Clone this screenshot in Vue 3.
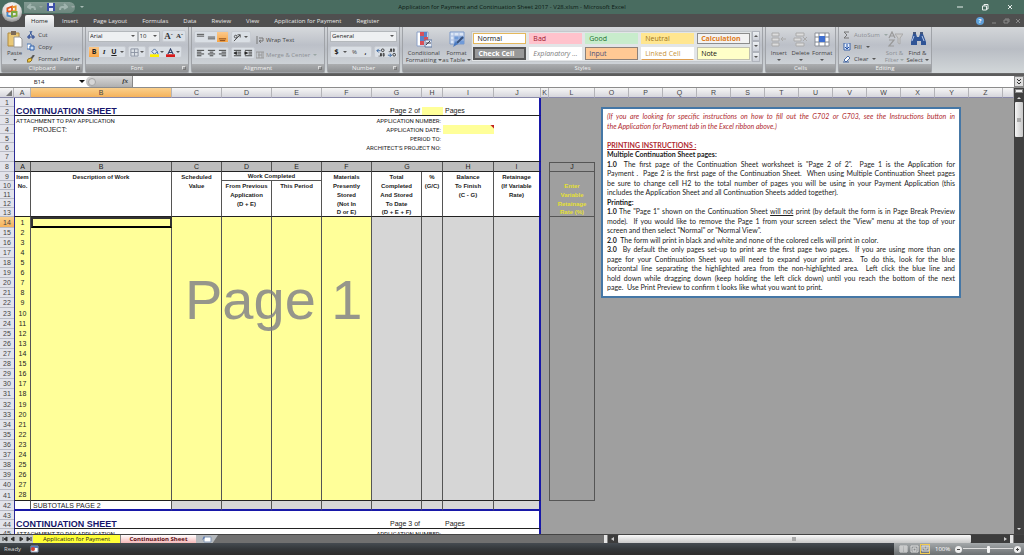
<script setup>
import { ref } from 'vue'

const tabs = ['Insert', 'Page Layout', 'Formulas', 'Data', 'Review', 'View', 'Application for Payment', 'Register']
const sheetCols = ['A', 'B', 'C', 'D', 'E', 'F', 'G', 'H', 'I', 'J', 'K', 'L']
const wideCols = ['O', 'P', 'Q', 'R', 'S', 'T', 'U', 'V', 'W', 'X', 'Y', 'Z']
const styles = ['Normal', 'Bad', 'Good', 'Neutral', 'Calculation', 'Check Cell', 'Explanatory ...', 'Input', 'Linked Cell', 'Note']
const zoomLevel = ref(50)

const c = (text = '', span = 1, cls = '') => ({ text, span, cls })

const pageRows = (first, page, fill) => [
  { n: first, cls: 'r9', cells: [c('', 10)] },
  {
    n: first + 1,
    cls: 'r9 rule',
    cells: [c('CONTINUATION SHEET', 5, 'title'), c(), c('Page ' + page + ' of', 1, 'right'), c('', 1, fill), c('Pages', 2)]
  },
  { n: first + 2, cls: 'r9', cells: [c('ATTACHMENT TO PAY APPLICATION', 5, 'small'), c('APPLICATION NUMBER:', 3, 'small right'), c('', 2)] }
]

const headLines = [
  ['Item', 'Description of Work', 'Scheduled', 'Work Completed', null, 'Materials', 'Total', '%', 'Balance', 'Retainage'],
  ['No.', '', 'Value', 'From Previous', 'This Period', 'Presently', 'Completed', '(G/C)', 'To Finish', '(If Variable'],
  ['', '', '', 'Application', '', 'Stored', 'And Stored', '', '(C - G)', 'Rate)'],
  ['', '', '', '(D + E)', '', '(Not In', 'To Date', '', '', ''],
  ['', '', '', '', '', 'D or E)', '(D + E + F)', '', '', '']
]
const retainage = ['', 'Enter', 'Variable', 'Retainage', 'Rate (%)']

const rows = [
  ...pageRows(1, 2, 'yellow'),
  {
    n: 4,
    cls: 'r9',
    cells: [c(), c('PROJECT:', 4), c('APPLICATION DATE:', 3, 'small right'), c('', 1, 'yellow note'), c()]
  },
  { n: 5, cls: 'r9', cells: [c('', 5), c('PERIOD TO:', 3, 'small right'), c('', 2)] },
  { n: 6, cls: 'r9', cells: [c('', 5), c("ARCHITECT'S PROJECT NO:", 3, 'small right'), c('', 2)] },
  { n: 7, cls: 'r10 rule', cells: [c('', 10)] },
  {
    n: 8,
    cls: 'r9 rule letters',
    cells: ['A', 'B', 'C', 'D', 'E', 'F'].map((t) => c(t, 1, 'line')).concat([c('G', 2, 'line'), c('H', 1, 'line'), c('I')]),
    side: 'J'
  },
  ...headLines.map((line, i) => ({
    n: 9 + i,
    cls: 'r9 heads' + (i === 4 ? ' rule' : ''),
    cells: line
      .map((t, k) => c(t, i === 0 && k === 3 ? 2 : 1, (k < 9 ? 'line' : '') + (i === 0 && k === 3 ? ' under' : '')))
      .filter((x) => x.text !== null),
    side: retainage[i]
  })),
  ...Array.from({ length: 28 }, (_, i) => ({
    n: 14 + i,
    cls: (i % 9 === 0 ? 'r11' : 'r10') + ' items' + (i === 27 ? ' rule' : ''),
    cells: Array.from({ length: 10 }, (_, k) =>
      c(k === 0 ? String(i + 1) : '', 1, (k < 6 ? 'yellow' : 'grey') + (k < 9 ? ' line' : '') + (i === 0 && k === 1 ? ' active' : ''))
    ),
    side: ''
  })),
  {
    n: 42,
    cls: 'r10 total',
    cells: [c('', 1, 'line'), c('SUBTOTALS PAGE 2', 1, 'line')].concat(
      Array.from({ length: 8 }, (_, k) => c('', 1, 'grey' + (k < 7 ? ' line' : '')))
    )
  },
  ...pageRows(43, 3, '')
]
</script>

<template>
  <div class="excel">
    <header class="titlebar">
      <button class="office" aria-label="Office menu">
        <svg viewBox="0 0 24 24">
          <defs>
            <radialGradient id="orb" cx=".5" cy=".3" r=".7">
              <stop offset="0" stop-color="#fff" /><stop offset=".6" stop-color="#dcdcdc" /><stop offset="1" stop-color="#8c8c8c" />
            </radialGradient>
          </defs>
          <circle cx="12" cy="12" r="11" fill="url(#orb)" />
          <g fill="none" stroke-width="2">
            <path d="M7 8l5-2v5l-5 1z" stroke="#e05a20" />
            <path d="M12 7l4-1v5h-4" stroke="#e8942c" />
            <path d="M7 12v4l5 1v-5" stroke="#4b8ac8" />
            <path d="M12 12h5v4l-5 1z" stroke="#7aa83c" />
          </g>
        </svg>
      </button>
      <div class="quick">
        <button aria-label="Undo"><svg viewBox="0 0 10 8"><path d="M2 4h4q2 0 2 3M4 1L1 4l3 2" /></svg></button>
        <i class="caret pale"></i>
        <button aria-label="Save">
          <svg viewBox="0 0 10 8"><path d="M1 0h8v8H1z" fill="#3b4fa8" stroke="none" /><path d="M3 0h4v3H3zM3 5h4v3H3z" fill="#e4e8f8" stroke="none" /></svg>
        </button>
        <button aria-label="Redo"><svg viewBox="0 0 10 8"><path d="M8 4H4Q2 4 2 7M6 1l3 3-3 2" /></svg></button>
        <i class="caret pale"></i>
      </div>
      <i class="caret more"></i>
      <h1>Application for Payment and Continuation Sheet 2017 - V28.xlsm - Microsoft Excel</h1>
      <div class="winbtns">
        <button aria-label="Minimize"><svg viewBox="0 0 8 8"><path d="M1 4h6" /></svg></button>
        <button aria-label="Restore"><svg viewBox="0 0 8 8"><path d="M1.500 3h4v4h-4zM3 3V1.500h4V6H6" /></svg></button>
        <button aria-label="Close"><svg viewBox="0 0 8 8"><path d="M2 2l4 4M6 2L2 6" /></svg></button>
      </div>
    </header>

    <nav class="tabs">
      <button class="tab on">Home</button>
      <button v-for="t in tabs" :key="t" class="tab">{{ t }}</button>
      <div class="winbtns doc">
        <button aria-label="Help" class="help">?</button>
        <button aria-label="Minimize workbook"><svg viewBox="0 0 8 8"><path d="M2 6h4" /></svg></button>
        <button aria-label="Restore workbook"><svg viewBox="0 0 8 8"><path d="M2 3h4v3H2zM3 2h4v3" /></svg></button>
        <button aria-label="Close workbook"><svg viewBox="0 0 8 8"><path d="M2 2l4 4M6 2L2 6" /></svg></button>
      </div>
    </nav>

    <section class="ribbon">
      <div class="group clip">
        <div class="body">
          <button class="big">
            <svg viewBox="0 0 16 17"><path d="M1 2h11v13H1z" fill="#e9c877" stroke="#b08a40" /><path d="M4 0h5v4H4z" fill="#7a6a58" /><path d="M7 6h6l2 2v8H7z" fill="#fff" stroke="#9a9a9a" /></svg>
            Paste<i class="caret"></i>
          </button>
          <div class="list">
            <button><svg viewBox="0 0 8 8"><path d="M5 0L2 5M3 0l2 5" stroke="#3a5a9c" /><path d="M1 5h2v2H1zM5 5h2v2H5z" fill="none" stroke="#1f3f8c" /></svg>Cut</button>
            <button><svg viewBox="0 0 8 8"><path d="M0 1h4v5H0z" fill="#fff" stroke="#4a78b8" /><path d="M3 3h4v4H3z" fill="#c8dcf4" stroke="#2f5fa8" /></svg>Copy</button>
            <button><svg viewBox="0 0 8 8"><path d="M7 0L4 4" stroke="#555" stroke-width="2" /><path d="M0 7l1-3 3-1 1 2-2 2z" fill="#f0c840" stroke="#907020" /></svg>Format Painter</button>
          </div>
        </div>
        <footer>Clipboard<i class="launch"></i></footer>
      </div>

      <div class="group font">
        <div class="body stack">
          <div class="line1">
            <span class="pick face"><select aria-label="Font"><option>Arial</option></select></span>
            <span class="pick size"><select aria-label="Font size"><option>10</option></select></span>
            <span class="set gapl"><button class="ga">A<sup>ˆ</sup></button><button class="ga less">A<sup>ˇ</sup></button></span>
          </div>
          <div class="line1">
            <span class="set">
              <button class="b on">B</button><button class="i">I</button><button class="u">U</button><i class="caret"></i>
            </span>
            <span class="set">
              <button aria-label="Borders"><svg viewBox="0 0 10 10"><path d="M1 1h8v8H1zM5 1v8M1 5h8" fill="none" stroke="#8a92a0" /></svg></button><i class="caret"></i>
            </span>
            <span class="set">
              <button aria-label="Fill color"><svg viewBox="0 0 10 10"><path d="M2 4l3-3 3 3-3 3z" fill="#dfe8f4" stroke="#44618c" /><path d="M8 4l1 3" stroke="#2f6fc0" /><path d="M0 7h10v3H0z" fill="#fff000" /></svg></button><i class="caret"></i>
              <button aria-label="Font color"><svg viewBox="0 0 10 10"><path d="M2 7l3-6 3 6M3 5h4" fill="none" stroke="#2f3f66" stroke-width="1.200" /><path d="M0 7h10v3H0z" fill="#d81818" /></svg></button><i class="caret"></i>
            </span>
          </div>
        </div>
        <footer>Font<i class="launch"></i></footer>
      </div>

      <div class="group align">
        <div class="body">
          <div class="stack">
            <div class="line1">
              <span class="set">
                <button aria-label="Top align"><svg viewBox="0 0 10 10"><path d="M1 1.500h8M1 3.500h8" stroke="#444" /></svg></button>
                <button aria-label="Middle align"><svg viewBox="0 0 10 10"><path d="M1 4.500h8M1 6.500h8" stroke="#444" /></svg></button>
                <button aria-label="Bottom align" class="on"><svg viewBox="0 0 10 10"><path d="M1 6.500h8M2 8.500h6" stroke="#7a3c10" /></svg></button>
              </span>
              <span class="set"><button aria-label="Orientation"><svg viewBox="0 0 10 10"><path d="M1 9l7-7M5 2h3v3" fill="none" stroke="#444" /><circle cx="3" cy="4" r="1.500" fill="none" stroke="#444" /></svg></button><i class="caret"></i></span>
            </div>
            <div class="line1">
              <span class="set">
                <button aria-label="Align left"><svg viewBox="0 0 10 10"><path d="M1 1.500h8M1 3.500h5M1 5.500h8M1 7.500h5" stroke="#333" /></svg></button>
                <button aria-label="Center"><svg viewBox="0 0 10 10"><path d="M1 1.500h8M3 3.500h4M1 5.500h8M3 7.500h4" stroke="#333" /></svg></button>
                <button aria-label="Align right"><svg viewBox="0 0 10 10"><path d="M1 1.500h8M4 3.500h5M1 5.500h8M4 7.500h5" stroke="#333" /></svg></button>
              </span>
              <span class="set">
                <button aria-label="Decrease indent"><svg viewBox="0 0 10 10"><path d="M1 1.500h8M5 3.500h4M5 5.500h4M1 7.500h8M4 3v3L1 4.500z" stroke="#333" /></svg></button>
                <button aria-label="Increase indent"><svg viewBox="0 0 10 10"><path d="M1 1.500h8M5 3.500h4M5 5.500h4M1 7.500h8M1 3v3l3-1.500z" stroke="#333" /></svg></button>
              </span>
            </div>
          </div>
          <div class="list wide">
            <button><svg viewBox="0 0 8 8"><path d="M1 0v8M3 2h4v3H3M5 4L3 5l2 2" fill="none" stroke="#777" /></svg>Wrap Text</button>
            <button class="dim"><svg viewBox="0 0 8 8"><path d="M0 1h8v6H0zM2 4h4M3 1v6M6 1v6" fill="none" stroke="#999" /></svg>Merge &amp; Center<i class="caret pale"></i></button>
          </div>
        </div>
        <footer>Alignment<i class="launch"></i></footer>
      </div>

      <div class="group number">
        <div class="body stack">
          <div class="line1"><span class="pick general"><select aria-label="Number format"><option>General</option></select></span></div>
          <div class="line1">
            <span class="set"><button class="b">$</button><i class="caret"></i><button>%</button><button class="b">,</button></span>
            <span class="set">
              <button aria-label="Increase decimal"><svg viewBox="0 0 10 10"><path d="M1 3h4M3 1L1 3l2 2" fill="none" stroke="#2f5f9c" /><circle cx="7.500" cy="2.500" r="1.500" fill="none" stroke="#333" /><path d="M3 9h1M5 6h1v3H5zM8 6h1v3H8z" fill="none" stroke="#333" /></svg></button>
              <button aria-label="Decrease decimal"><svg viewBox="0 0 10 10"><path d="M1 8h4M3 6l2 2-2 2" fill="none" stroke="#2f5f9c" /><circle cx="8" cy="7.500" r="1.500" fill="none" stroke="#333" /><path d="M2 4h1M4 1h1v3H4zM7 1h1v3H7z" fill="none" stroke="#333" /></svg></button>
            </span>
          </div>
        </div>
        <footer>Number<i class="launch"></i></footer>
      </div>

      <div class="group styles">
        <div class="body">
          <button class="big cond">
            <svg viewBox="0 0 16 17"><path d="M1 1h11v14H1z" fill="#fff" stroke="#8aa0c8" /><path d="M4 1h4v4H4zM8 6h4v4H8zM4 10h4v4H4z" fill="#d8505a" /><path d="M4 5h4v5H4zM8 1h3v5H8z" fill="#5b82c8" /><path d="M9 9h7v7H9z" fill="#e8eef8" stroke="#6078a0" /><path d="M10 14l4-4M10 12h5" stroke="#445" /></svg>
            <span>Conditional<br />Formatting <i class="caret inl"></i></span>
          </button>
          <button class="big fmt">
            <svg viewBox="0 0 16 17"><path d="M1 1h14v12H1z" fill="#dbe6f6" stroke="#7a98c8" /><path d="M5 5h10v8H5z" fill="#6f9ad8" /><path d="M1 5h14M1 9h14M5 1v12M10 1v12" stroke="#a8bce0" /><path d="M14 6l-6 6" stroke="#38527c" stroke-width="2" /><path d="M4 16l2-5 3 2z" fill="#4878c0" /></svg>
            <span>Format<br />as Table <i class="caret inl"></i></span>
          </button>
          <div class="gallery">
            <button v-for="(s, i) in styles" :key="s" :class="'st s' + i">{{ s }}</button>
          </div>
          <div class="gscroll">
            <button aria-label="Scroll styles up"><i class="caret up"></i></button>
            <button aria-label="Scroll styles down"><i class="caret"></i></button>
            <button aria-label="More styles"><i class="caret"></i></button>
          </div>
        </div>
        <footer>Styles</footer>
      </div>

      <div class="group cells">
        <div class="body">
          <button class="big">
            <svg viewBox="0 0 16 17"><path d="M1 2h7v3H1zM1 7h7v3H1zM1 12h7v3H1z" fill="#ddd" stroke="#aaa" /><path d="M15 8h-5M12 6l-2 2 2 2" fill="none" stroke="#aaa" /></svg>
            Insert<i class="caret"></i>
          </button>
          <button class="big">
            <svg viewBox="0 0 16 17"><path d="M3 2h8v3H3zM1 7h7v3H1zM3 12h8v3H3z" fill="#ddd" stroke="#aaa" /><path d="M10 6l4 4M14 6l-4 4" fill="none" stroke="#aaa" /></svg>
            Delete<i class="caret"></i>
          </button>
          <button class="big">
            <svg viewBox="0 0 16 17"><path d="M1 2h14v13H1z" fill="#fff" stroke="#8c9098" /><path d="M5 2v13M11 2v13M1 6h14M1 11h14" stroke="#7c8490" /><path d="M5 5h6v6H5z" fill="#3f6fd0" /></svg>
            Format<i class="caret"></i>
          </button>
        </div>
        <footer>Cells</footer>
      </div>

      <div class="group editing">
        <div class="body">
          <div class="list">
            <button class="dim"><svg viewBox="0 0 8 8"><path d="M6 1H1l3 3-3 3h5" fill="none" stroke="#777" /></svg>AutoSum<i class="caret pale"></i></button>
            <button><svg viewBox="0 0 8 8"><path d="M1 0h6v7H1z" fill="#e8f0fc" stroke="#3a62a8" /><path d="M4 1v4M2 4l2 2 2-2" fill="none" stroke="#1f4fa8" /></svg>Fill<i class="caret"></i></button>
            <button><svg viewBox="0 0 8 8"><path d="M1 5l4-4 2 2-4 4z" fill="#fff" stroke="#4a6ca8" /><path d="M0 7h6" stroke="#3f62a0" /></svg>Clear<i class="caret"></i></button>
          </div>
          <button class="big dim">
            <svg viewBox="0 0 16 17"><path d="M2 7l3-6 3 6M3 5h4M2 9h5l-5 6h5" fill="none" stroke="#999" stroke-width="1.200" /><path d="M8 3h8l-3 4v6l-2-1V7z" fill="#ccc" stroke="#aaa" /></svg>
            <span>Sort &amp;<br />Filter <i class="caret inl pale"></i></span>
          </button>
          <button class="big">
            <svg viewBox="0 0 16 17"><path d="M3 3h3l1 3h2l1-3h3l3 8v3h-5v-4H7v4H1v-3z" fill="#2f5496" /><path d="M4 5l-2 5M12 5l2 5" stroke="#b4c8ec" /><path d="M3 1h3v2H3zM10 1h3v2h-3z" fill="#44577c" /></svg>
            <span>Find &amp;<br />Select <i class="caret inl"></i></span>
          </button>
        </div>
        <footer>Editing</footer>
      </div>
    </section>

    <div class="fbar">
      <input class="name" aria-label="Name box" value="B14" />
      <button class="drop" aria-label="Name list"><i class="caret dark"></i></button>
      <div class="fx"><i class="knob"></i><button aria-label="Insert function">fx</button></div>
      <input class="formula" aria-label="Formula" />
      <button class="expand" aria-label="Expand formula bar"><svg viewBox="0 0 6 8"><path d="M1 1l2 2 2-2M1 4l2 2 2-2" /></svg></button>
    </div>

    <main class="work">
      <div class="sheet">
        <table>
          <colgroup>
            <col class="c14" /><col class="c17" /><col class="c141" />
            <col v-for="k in 5" :key="k" class="c50" />
            <col class="c21" /><col class="c51" /><col class="c47" /><col class="c8" /><col class="c46" />
            <col v-for="k in wideCols" :key="k" class="c34" />
            <col />
          </colgroup>
          <thead>
            <tr>
              <th class="corner" aria-label="Select all"><i></i></th>
              <th v-for="k in sheetCols" :key="k" :class="{ sel: k === 'B' }">{{ k }}</th>
              <th v-for="k in wideCols" :key="k">{{ k }}</th>
              <th></th>
            </tr>
          </thead>
          <tbody>
            <tr v-for="r in rows" :key="r.n" :class="r.cls">
              <th :class="{ sel: r.n === 14 }">{{ r.n }}</th>
              <td v-for="(d, i) in r.cells" :key="i" :colspan="d.span" class="s" :class="d.cls">{{ d.text }}</td>
              <td></td>
              <td :class="{ side: r.side !== undefined }">{{ r.side }}</td>
              <td colspan="13"></td>
            </tr>
          </tbody>
        </table>
        <div class="watermark">Page 1</div>
        <article class="help-box">
          <p class="red full">(If you are looking for specific instructions on how to fill out the G702 or G703, see the Instructions button in</p>
          <p class="red">the Application for Payment tab in the Excel ribbon above.)</p>
          <p>&nbsp;</p>
          <p class="head"><u>PRINTING INSTRUCTIONS :</u></p>
          <p><b>Multiple Continuation Sheet pages:</b></p>
          <p class="full"><b>1.0</b>&nbsp; The first page of the Continuation Sheet worksheet is "Page 2 of 2".&nbsp; Page 1 is the Application for</p>
          <p class="full">Payment .&nbsp; Page 2 is the first page of the Continuation Sheet.&nbsp; When using Multiple Continuation Sheet pages</p>
          <p class="full">be sure to change cell H2 to the total number of pages you will be using in your Payment Application (this</p>
          <p>includes the Application Sheet and all Continuation Sheets added together).</p>
          <p><b>Printing:</b></p>
          <p class="full"><b>1.0</b> The "Page 1" shown on the Continuation Sheet <u>will not</u> print (by default the form is in Page Break Preview</p>
          <p class="full">mode).&nbsp; If you would like to remove the Page 1 from your screen select the "View" menu at the top of your</p>
          <p>screen and then select "Normal" or "Normal View".</p>
          <p><b>2.0</b>&nbsp; The form will print in black and white and none of the colored cells will print in color.</p>
          <p class="full"><b>3.0</b>&nbsp; By default the only pages set-up to print are the first page two pages.&nbsp; If you are using more than one</p>
          <p class="full">page for your Continuation Sheet you will need to expand your print area.&nbsp; To do this, look for the blue</p>
          <p class="full">horizontal line separating the highlighted area from the non-highlighted area.&nbsp; Left click the blue line and</p>
          <p class="full">hold down while dragging down (keep holding the left click down) until you reach the bottom of the next</p>
          <p>page.&nbsp; Use Print Preview to confirm t looks like what you want to print.</p>
        </article>
      </div>
      <div class="vscroll">
        <i class="split"></i>
        <button aria-label="Scroll up"><i class="caret up white"></i></button>
        <div class="thumb"><i></i></div>
        <div class="track"></div>
        <button aria-label="Scroll down"><i class="caret white"></i></button>
      </div>
    </main>

    <div class="bottom">
      <div class="navs">
        <button aria-label="First sheet"><svg viewBox="0 0 6 6"><path d="M1 1v4M5 1v4L2 3z" /></svg></button>
        <button aria-label="Previous sheet"><svg viewBox="0 0 6 6"><path d="M4 1v4L1 3z" /></svg></button>
        <button aria-label="Next sheet"><svg viewBox="0 0 6 6"><path d="M2 1v4l3-2z" /></svg></button>
        <button aria-label="Last sheet"><svg viewBox="0 0 6 6"><path d="M5 1v4M1 1v4l3-2z" /></svg></button>
      </div>
      <button class="stab app">Application for Payment</button>
      <button class="stab cur">Continuation Sheet</button>
      <button class="newtab" aria-label="Insert worksheet"><svg viewBox="0 0 22 9"><path d="M0 0h22l-6 9H0z" fill="#b4b8bc" /><path d="M8 2h7v5H8z" fill="#fff" stroke="#8296b4" /><path d="M6 5l2-4 1 2z" fill="#5a7ab0" /></svg></button>
      <div class="fillbar"></div>
      <div class="hscroll">
        <i class="split"></i>
        <button aria-label="Scroll left"><svg viewBox="0 0 6 6"><path d="M4 1v4L1 3z" /></svg></button>
        <div class="thumb"><i></i></div>
        <div class="track"></div>
        <button aria-label="Scroll right"><svg viewBox="0 0 6 6"><path d="M2 1v4l3-2z" /></svg></button>
        <i class="split"></i>
      </div>
    </div>

    <footer class="status">
      <span>Ready</span>
      <button class="macro" aria-label="Record macro"><svg viewBox="0 0 9 8"><path d="M1 1h7v6H1z" fill="#fff" stroke="#8c9cb8" /><path d="M1 1h7v2H1z" fill="#5a7cb8" /><circle cx="3" cy="4" r="2" fill="#d04030" /></svg></button>
      <div class="zoom">
        <button aria-label="Normal view"><svg viewBox="0 0 9 8"><path d="M1 1h7v6H1zM1 3h7M1 5h7M3 1v6M6 1v6" /></svg></button>
        <button aria-label="Page layout view"><svg viewBox="0 0 9 8"><path d="M1 1h7v6H1zM3 3h3v3H3z" /></svg></button>
        <button aria-label="Page break preview" class="on"><svg viewBox="0 0 9 8"><path d="M1 1h7v5H1zM3 1v3h3V1" /></svg></button>
        <span>100%</span>
        <button class="round" aria-label="Zoom out"><svg viewBox="0 0 7 7"><circle cx="3.500" cy="3.500" r="3.500" fill="#eee" stroke="none" /><path d="M2 3.500h3" stroke="#444" /></svg></button>
        <input v-model="zoomLevel" type="range" aria-label="Zoom" />
        <button class="round" aria-label="Zoom in"><svg viewBox="0 0 7 7"><circle cx="3.500" cy="3.500" r="3.500" fill="#eee" stroke="none" /><path d="M2 3.500h3M3.500 2v3" stroke="#444" /></svg></button>
      </div>
    </footer>
  </div>
</template>

<style>
body { margin: 0; background: #9f9f9f; }
</style>

<style scoped>
.excel { display: flex; flex-direction: column; height: 100vh; overflow: hidden; font: 6px/8px "Open Sans", "Noto Sans", sans-serif; color: #333; }
.excel * { box-sizing: border-box; }
button, input, select { font: inherit; color: inherit; margin: 0; padding: 0; border: 0; background: none; min-width: 0; outline: 0; }
button { display: inline-flex; align-items: center; justify-content: center; white-space: nowrap; }
svg { display: block; flex: none; }
.caret { display: inline-block; flex: none; width: 0; height: 0; border: 2px solid transparent; border-top-color: #555; border-bottom: 0; }
.caret.pale { border-top-color: #9aa6a4; }
.caret.white { border-top-color: #ddd; }
.caret.dark { border-width: 3px 3px 0; border-top-color: #111; }
.caret.up { transform: rotate(180deg); }
.caret.inl { vertical-align: middle; }

/* title bar */
.titlebar { position: relative; z-index: 3; display: flex; align-items: center; flex: none; height: 14px; background: #496c60; }
.office { position: absolute; left: 0; top: 0; width: 23px; height: 24px; }
.office svg { width: 22px; height: 22px; }
.quick { display: flex; align-items: center; gap: 3px; width: 51px; height: 11px; margin-left: 24px; padding-left: 3px; border-radius: 0 6px 6px 0; background: linear-gradient(#829a92, #6c877e); }
.quick svg { width: 10px; height: 8px; fill: none; stroke: #a0b4ae; stroke-width: 2; }
.more { margin-left: 5px; border-top-color: #a8bab4; }
.titlebar h1 { position: absolute; left: 0; right: 0; margin: 0; text-align: center; pointer-events: none; font: 6px/10px "Open Sans", sans-serif; color: #0c1a14; }
.winbtns { display: flex; align-items: center; gap: 17px; margin-left: auto; padding-right: 10px; }
.winbtns svg { width: 8px; height: 8px; fill: none; stroke: #e8eeec; }
.winbtns.doc { gap: 4px; padding-right: 2px; }
.winbtns.doc svg { stroke: #8a8a8a; }
.help { width: 8px; height: 8px; border-radius: 4px; background: #5f9fd8; color: #fff; font-weight: 700; margin-right: 2px; }

/* tab strip */
.tabs { display: flex; align-items: flex-end; gap: 1px; flex: none; height: 13px; padding-left: 25px; background: #4f4f4f; color: #e8e8e8; }
.tab { height: 12px; padding: 0 7px; }
.tab.on { padding: 0 6px; background: linear-gradient(#fafafa, #d6d9dc); border-radius: 2px 2px 0 0; color: #222; }
.doc { align-self: center; }

/* ribbon */
.ribbon { display: flex; gap: 2px; flex: none; height: 49px; padding: 0 1px 2px; background: linear-gradient(#d3d6d9, #b9bdc4 45%, #d2d7d9 94%, #5c5c5c 95%); color: #444; }
.group { display: flex; flex-direction: column; flex: none; height: 46px; border: 1px solid #a0a3a8; border-top: 0; border-radius: 0 0 2px 2px; background: linear-gradient(#d6d9dc, #bcc0c8 40%, #d4d9dc); }
.group > footer { position: relative; flex: none; height: 8px; text-align: center; color: #f4f4f4; background: linear-gradient(#acaeb0, #8e9092); }
.launch { position: absolute; right: 2px; top: 2px; width: 4px; height: 4px; border: 1px solid #ddd; border-right-color: #777; border-bottom-color: #777; }
.body { display: flex; flex: 1; padding: 4px 2px 0; }
.clip { width: 82px; } .font { width: 104px; } .align { width: 134px; } .number { width: 73px; } .styles { width: 361px; } .cells { width: 71px; } .editing { width: 94px; }
.big { flex-direction: column; justify-content: flex-start; align-items: center; display: flex; white-space: nowrap; line-height: 7px; text-align: center; }
.big svg { width: 16px; height: 17px; margin-bottom: 2px; }
.clip .big { width: 22px; }
.clip .big .caret { margin-top: 2px; }
.list { display: flex; flex-direction: column; gap: 4px; margin-left: 2px; }
.list button { justify-content: flex-start; gap: 3px; height: 8px; }
.list svg { width: 8px; height: 8px; fill: none; }
.list .caret { margin-left: 1px; }
.list.wide { margin: 5px 0 0 1px; gap: 7px; }
.wide button { gap: 2px; }
.dim { color: #8c8f94; }
.stack { display: flex; flex-direction: column; gap: 4px; padding-top: 3px; }
.body > .stack { padding-top: 0; }
.line1 { display: flex; align-items: center; gap: 2px; height: 12px; }
.pick { position: relative; display: inline-flex; height: 11px; background: #eef0f2; border: 1px solid #b4b8bc; }
.pick select { width: 100%; appearance: none; padding-left: 1px; line-height: 8px; color: #222; }
.pick::after { content: ""; position: absolute; right: 2px; top: 3px; border: 2px solid transparent; border-top-color: #555; border-bottom: 0; }
.face { width: 51px; margin-right: -2px; } .size { width: 23px; } .general { width: 69px; }
.set { display: inline-flex; align-items: center; height: 12px; border: 1px solid #c8ccd2; border-radius: 2px; background: #dadfe5; }
.set button { width: 11px; height: 10px; }
.set svg { width: 9px; height: 9px; }
.set .caret { margin: 0 2px 0 1px; }
.font .set button { width: 10px; }
.font .set .caret { margin: 0 1px; }
.font .set .ga { width: 11px; }
.set .on { background: linear-gradient(#fbc88a, #f9a544); }
.b, .u, .i { color: #222; font-size: 7px; font-weight: 700; }
.i { font-family: "Liberation Serif", serif; font-style: italic; }
.u { text-decoration: underline; }
.ga { font: 700 9px/10px "Liberation Serif", serif; color: #333; }
.ga.less { font-size: 7px; }
.ga sup { font-size: 6px; line-height: 6px; }
.cond { width: 38px; }
.fmt { width: 28px; }
.gallery { display: grid; grid-template-columns: repeat(5, 1fr); gap: 3px; width: 283px; height: 31px; padding: 1px; margin-left: 1px; border: 1px solid #c4c8cc; background: #e2e5e7; }
.st { justify-content: flex-start; padding-left: 3px; font-size: 7px; line-height: 9px; border: 1px solid transparent; overflow: hidden; }
.s0 { background: #fff; border: 1px solid #e4b85c; color: #111; }
.s1 { background: #ffc2cc; color: #a01830; }
.s2 { background: #c8eccc; color: #1c7030; }
.s3 { background: #ffe690; color: #9c7420; }
.s4 { background: #f2f2f2; border-color: #8c8c8c; color: #e07c20; font-weight: 700; }
.s5 { background: #989898; border: 2px double #555; color: #fff; font-weight: 700; }
.s6 { background: #fff; color: #808080; font-style: italic; }
.s7 { background: #ffc994; border-color: #8c8078; color: #505078; }
.s8 { background: #fff; border-bottom: 1px solid #e0a050; color: #c89440; }
.s9 { background: #ffffc8; border-color: #c0c0b0; color: #111; }
.gscroll { display: flex; flex-direction: column; width: 8px; height: 31px; }
.gscroll button { flex: 1; border: 1px solid #b0b4bc; background: linear-gradient(#eceff2, #ccd0d8); }
.cells .big { width: 22px; }
.cells .caret { margin-top: 2px; }
.editing .list { width: 40px; }
.editing .big { width: 24px; }

/* formula bar */
.fbar { display: flex; flex: none; height: 11px; background: #fff; }
.name { width: 78px; text-align: center; color: #222; }
.drop { width: 8px; }
.fx { display: flex; align-items: center; justify-content: space-between; width: 47px; padding: 0 4px 0 2px; border-right: 1px solid #888; border-radius: 6px 0 0 6px; background: linear-gradient(#d8d8d8, #b0b0b0); }
.knob { width: 8px; height: 8px; border: 1px solid #a4a4a4; border-radius: 4px; background: #d6d6d6; }
.fx button { font: italic 700 7px/9px "Liberation Serif", serif; }
.formula { flex: 1; padding: 0 3px; }
.expand { width: 10px; border: 1px solid #888; background: #dcdcdc; }
.expand svg { width: 6px; height: 8px; fill: none; stroke: #333; }

/* worksheet */
.work { display: flex; flex: 1; min-height: 0; border-top: 1px solid #8c8c8c; background: #9f9f9f; }
.sheet { position: relative; flex: 1; min-width: 0; overflow: hidden; }
table { width: 100%; table-layout: fixed; border-collapse: separate; border-spacing: 0; font: 7px/8px "Liberation Sans", Arial, sans-serif; color: #222; }
.c14 { width: 14px; } .c17 { width: 17px; } .c141 { width: 141px; } .c50 { width: 50px; } .c21 { width: 21px; }
.c51 { width: 51px; } .c47 { width: 47px; } .c8 { width: 8px; } .c46 { width: 46px; } .c34 { width: 34px; }
th { padding: 0; font-weight: 400; color: #444; }
thead th { height: 10px; background: linear-gradient(#f6f6f6, #d6d6dc); border-right: 1px solid #b4b4b8; border-bottom: 1px solid #8888a8; }
thead th.sel, tbody th.sel { background: linear-gradient(#fbd08c, #f4b25c); }
.corner i { display: block; width: 0; margin-left: 6px; border: 3px solid transparent; border-right-color: #777; border-bottom-color: #777; }
tbody th { background: #e2e3ea; border-bottom: 1px solid #b8bac4; line-height: 7px; }
td { padding: 0; overflow: visible; white-space: nowrap; line-height: 8px; }
.s { background: #fff; padding: 0 2px; }
th + .s { border-left: 1px solid #2c2c96; padding-left: 1px; }
.s:nth-last-child(4) { border-right: 2px solid #1818a8; }
.r9 > * { height: 9px; } .r10 > * { height: 10px; } .r11 > * { height: 11px; }
.rule > .s { border-bottom: 1px solid #222; }
.line { border-right: 1px solid #555; }
.right { text-align: right; }
.title { font-weight: 700; font-size: 9px; color: #16166c; }
.small { font: 6px/8px Roboto, sans-serif; }
.yellow { background: #ffff99; }
.note { background: linear-gradient(225deg, #c02020 2px, #ffff99 3px); }
.grey { background: #d6d6d6; }
.letters > .s { background: #bebebe; text-align: center; padding: 0; }
.heads > .s { text-align: center; padding: 0; font-weight: 700; font-size: 6px; }
.heads > .under { border-bottom: 1px solid #555; }
.items > .s { text-align: center; padding: 0; }
.items > .active { border: 2px solid #333; border-bottom-color: #000; }
.total > .s { border-bottom: 2px solid #1818a8; line-height: 7px; }
.side { border: solid #555; border-width: 0 1px; text-align: center; }
.letters .side { border-width: 1px; }
.heads .side { color: #e6e034; font-weight: 700; font-size: 6px; }
.rule .side { border-bottom-width: 1px; }
.watermark { position: absolute; left: 185px; top: 179px; font: 56px/66px "Liberation Sans", Arial, sans-serif; color: #808088; opacity: .82; pointer-events: none; }
.help-box { position: absolute; left: 601px; top: 19px; display: flex; flex-direction: column; justify-content: space-between; width: 360px; height: 191px; padding: 3px 4px 4px; border: 2px solid #4577a6; background: #fff; font: 7px/9px Lato, sans-serif; color: #222; white-space: nowrap; }
.help-box p { margin: 0; }
.help-box .full { text-align: justify; text-align-last: justify; }
.help-box .red { color: #b02a30; font-style: italic; }
.help-box .head { color: #b02a30; font-weight: 700; }

/* scroll bars */
.vscroll { display: flex; flex-direction: column; flex: none; width: 10px; padding: 1px; background: #404040; }
.vscroll .split { height: 4px; border: 1px solid #888; background: #eee; }
.vscroll button { height: 9px; }
.thumb { display: flex; align-items: center; justify-content: center; border-radius: 1px; }
.thumb i { width: 4px; height: 4px; background: #aaa; }
.vscroll .thumb { height: 35px; background: linear-gradient(90deg, #f4f4f4, #c8c8c8); }
.track { flex: 1; }
.bottom { display: flex; flex: none; height: 9px; background: #707070; border-top: 1px solid #444; }
.navs { display: flex; width: 33px; padding-left: 1px; background: #c0c4c8; }
.navs button { width: 8px; }
.navs svg, .hscroll svg { width: 6px; height: 6px; fill: #333; stroke: #333; stroke-width: 1; }
.stab { padding: 0 8px; line-height: 8px; color: #222; }
.app { width: 88px; background: #ffff38; border-right: 1px solid #888; }
.cur { width: 75px; padding: 0; background: linear-gradient(#fff, #f4b8b8); font-weight: 700; color: #601018; }
.newtab svg { width: 22px; height: 9px; }
.fillbar { flex: 1; }
.hscroll { display: flex; flex: none; width: 41%; padding-right: 10px; background: #3c3c3c; }
.hscroll .split { width: 4px; border-right: 1px solid #888; background: #e4e4e4; }
.hscroll button { width: 10px; }
.hscroll svg { fill: #ccc; stroke: none; }
.hscroll .thumb { flex: 12; background: linear-gradient(#fafafa, #c8c8c8); }

/* status bar */
.status { display: flex; align-items: center; flex: none; height: 12px; padding-left: 4px; color: #d8d8d8; background: linear-gradient(#454b51, #33373a 50%, #2e2c2b); }
.macro { margin-left: 9px; }
.macro svg { width: 9px; height: 8px; }
.zoom { display: flex; align-items: center; gap: 1px; width: 130px; height: 12px; margin-left: auto; padding: 0 3px 0 4px; background: linear-gradient(#a4a8aa, #6c7072); color: #fff; }
.zoom button { width: 10px; height: 10px; }
.zoom svg { width: 9px; height: 8px; fill: none; stroke: #ddd; }
.zoom .on { border: 1px solid #f0c850; }
.zoom span { margin: 0 4px; }
.zoom .round { width: 7px; }
.zoom .round svg { width: 7px; height: 7px; }
.zoom input { flex: 1; width: 20px; height: 8px; appearance: none; background: linear-gradient(transparent 3px, #ddd 3px, #ddd 4px, transparent 4px); }
.zoom input::-webkit-slider-thumb { appearance: none; width: 3px; height: 7px; background: #f4f4f4; border-radius: 1px; }
</style>
